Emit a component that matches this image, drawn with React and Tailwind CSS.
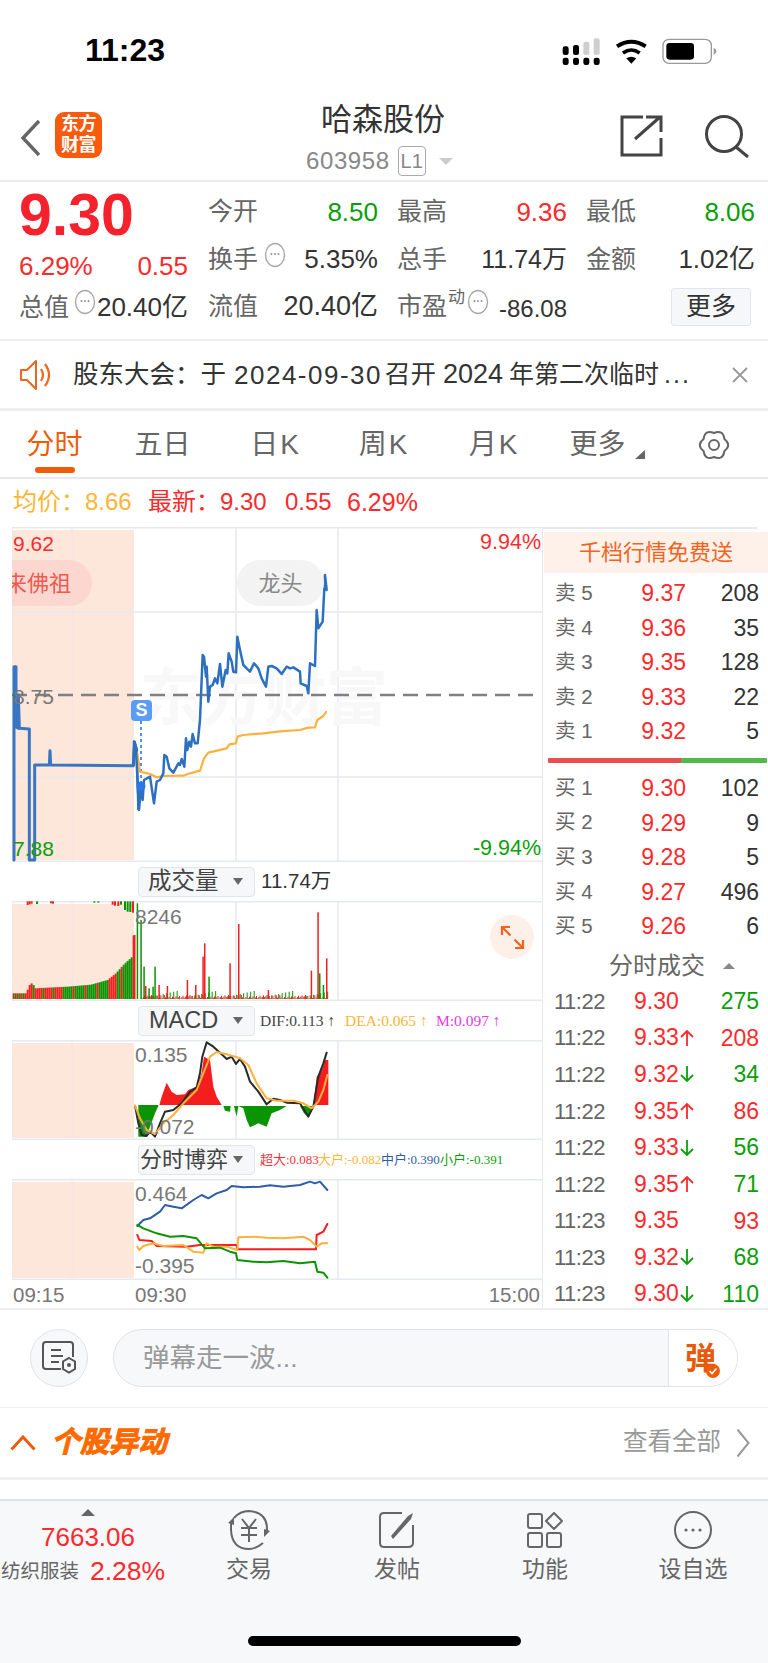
import React from "react";

const RED = "#fa2a2d";
const GREEN = "#0a9f0a";

const blue1 = "42,1020 42,440 48,440 48,620 55,625 55,525 58,625 88,627 88,1020 104,1020 104,735 148,735 150,692 152,735 400,737 403,665 410,690";
const blue2 = "12,545 18,570 27,750 33,680 38,720 42,660 60,650 72,730 80,665 90,660 100,640 103,585 110,590 118,625 130,638 145,610 150,615 155,597 163,620 168,535 172,570 178,545 183,560 188,522 195,550 203,550 210,480 218,285 222,290 228,350 230,320 235,425 240,380 248,375 255,355 262,370 270,312 277,380 287,330 292,340 296,280 305,305 310,335 318,337 322,230 330,270 340,315 350,325 360,335 372,310 385,325 395,355 408,380 415,320 425,318 440,325 455,342 470,320 480,325 490,322 510,335 512,370 530,378 535,400 540,310 555,318 560,150 565,205 578,185 585,45 590,90";
const yellow = "22,580 30,635 60,642 80,652 100,648 160,647 180,640 210,632 222,595 235,578 290,565 298,553 318,550 322,530 340,525 400,520 450,514 510,510 535,503 555,502 562,480 580,468 588,456";

const macdRed1 = "478,735 485,710 500,668 515,695 530,705 555,703 565,690 590,680 605,640 612,590 630,600 640,680 650,710 665,735";
const macdGreen1 = "405,735 415,735 415,830 440,830 450,800 465,760 475,738 475,735";
const macdGreen2 = "670,738 675,752 690,755 692,738 702,738 710,770 715,738 730,745 740,780 750,802 765,795 775,790 800,800 815,760 840,750 860,738";
const macdGreen3 = "900,738 912,760 925,772 935,745 938,738";
const macdRed2 = "940,735 950,650 965,632 975,600 985,600 985,735";
const dif = "405,737 415,790 425,825 440,828 450,815 465,830 480,790 495,755 520,750 545,730 570,695 590,682 600,640 607,590 620,547 640,560 665,583 680,597 695,590 708,612 720,597 735,620 750,665 775,695 800,733 820,716 840,720 860,728 900,730 925,770 940,740 955,650 970,610 980,578";
const dea = "405,737 420,775 440,810 465,822 490,790 520,765 550,730 590,690 610,640 630,590 650,576 680,583 720,595 745,615 770,670 800,715 830,722 880,722 910,730 935,745 955,725 970,690 982,645";

const gBlue = "412,1098 430,1080 450,1075 480,1055 495,1035 520,1040 545,1045 580,1020 605,1005 625,1015 650,1000 680,990 695,978 730,982 780,980 810,976 850,980 900,975 930,965 945,970 960,965 982,990";
const gGreen = "412,1095 430,1105 470,1120 510,1130 550,1128 590,1135 615,1165 660,1163 690,1175 708,1180 712,1200 760,1205 800,1207 850,1203 900,1210 945,1205 952,1235 970,1238 982,1253";
const gRed = "412,1125 418,1140 455,1143 470,1158 560,1160 600,1155 710,1155 712,1168 948,1168 950,1125 970,1115 982,1092";
const gYellow = "412,1160 418,1170 430,1158 460,1150 490,1158 550,1155 580,1175 610,1178 620,1150 640,1160 680,1160 712,1170 715,1132 760,1130 800,1133 850,1135 910,1130 930,1140 950,1160 965,1150 982,1150";

const envelope = [[38, 400], [78, 400], [82, 378], [95, 368], [102, 385], [200, 380], [270, 374], [320, 360], [345, 340], [370, 312], [392, 292], [398, 226], [402, 226]];
function interp(x) {
  for (let i = 1; i < envelope.length; i++) {
    const [a, b] = envelope[i - 1];
    const [c, d] = envelope[i];
    if (x <= c) return b + ((x - a) / (c - a)) * (d - b);
  }
  return 400;
}
const preBars = [];
for (let x = 38, i = 0; x < 404; x += 6, i++) {
  const isRed = x < 80 ? i % 2 === 0 : x < 190 ? i % 5 !== 0 : x > 330 && x < 350 ? true : i % 6 === 0;
  preBars.push({ x, y: interp(x), red: isRed });
}
const spikes = [
  [410, 130, 0], [421, 180, 0], [430, 320, 0], [463, 320, 0], [457, 380, 0], [625, 350, 0], [957, 340, 0], [968, 375, 0],
  [402, 225, 1], [612, 250, 1], [607, 290, 1], [688, 310, 1], [714, 192, 1], [560, 360, 1], [585, 375, 1], [932, 332, 1], [952, 157, 1], [978, 295, 1], [803, 390, 1], [475, 375, 1], [500, 378, 1], [435, 378, 1], [445, 385, 0],
];
const lowBars = [];
for (let x = 425, i = 0; x < 985; x += 3.5, i++) {
  lowBars.push({ x, y: 415 - ((i * 37) % 11) * (i % 3 === 0 ? 2.2 : 1), red: (i * 7) % 3 !== 0 });
}
const topBars = [
  [80, 135, 1], [86, 133, 1], [92, 131, 1], [108, 132, 0], [150, 130, 1], [156, 131, 1], [280, 128, 0], [292, 128, 0], [335, 134, 1], [342, 137, 1], [352, 138, 1], [360, 134, 0], [372, 150, 0], [380, 155, 0], [388, 156, 0], [396, 158, 1],
];

function gearPath(cx, cy, rx, ry) {
  let d = "";
  for (let i = 0; i < 6; i++) {
    const a0 = ((i * 60 - 30) * Math.PI) / 180;
    const a1 = ((i * 60) * Math.PI) / 180;
    const a2 = ((i * 60 + 30) * Math.PI) / 180;
    const v = 0.8;
    const p = 1.2;
    if (i === 0) d += `M${(cx + rx * v * Math.cos(a0)).toFixed(1)} ${(cy + ry * v * Math.sin(a0)).toFixed(1)}`;
    d += `Q${(cx + rx * p * Math.cos(a1)).toFixed(1)} ${(cy + ry * p * Math.sin(a1)).toFixed(1)} ${(cx + rx * v * Math.cos(a2)).toFixed(1)} ${(cy + ry * v * Math.sin(a2)).toFixed(1)}`;
  }
  return d + "Z";
}
const GEAR = gearPath(17, 16, 15, 15);

function Line({ points, color, w = 5 }) {
  return <polyline points={points} fill="none" stroke={color} strokeWidth={w} strokeLinejoin="round" strokeLinecap="round" />;
}

function Grid({ y1, y2, hs = [] }) {
  return (
    <>
      <rect x="12" y={y1 + 3} width="122" height={y2 - y1 - 5} fill="#fde6da" />
      {[72, 236, 338].map((x) => (
        <line key={x} x1={x} x2={x} y1={y1} y2={y2} stroke={x === 72 ? "#f2e6e4" : "#e6e9f0"} strokeWidth={x === 72 ? 1 : 1.5} />
      ))}
      <line x1="12" x2="12" y1={y1} y2={y2} stroke="#e6e9f0" strokeWidth="1" />
      {hs.map((y) => (
        <line key={y} x1="12" x2="542" y1={y} y2={y} stroke="#e6e9f0" strokeWidth="1.5" />
      ))}
      <line x1="12" x2="542" y1={y1 + 0.5} y2={y1 + 0.5} stroke="#e6e9f0" strokeWidth="2" />
      <line x1="12" x2="542" y1={y2 - 0.5} y2={y2 - 0.5} stroke="#e6e9f0" strokeWidth="2" />
    </>
  );
}

function Dots({ className = "" }) {
  return (
    <svg width="22" height="26" viewBox="0 0 22 26" className={className}>
      <ellipse cx="11" cy="13" rx="9.5" ry="11.5" fill="none" stroke="#a8a8a8" strokeWidth="1.4" />
      <circle cx="7.5" cy="12" r="0.9" fill="#888" />
      <circle cx="11" cy="12" r="0.9" fill="#888" />
      <circle cx="14.5" cy="12" r="0.9" fill="#888" />
    </svg>
  );
}

function Stat({ label, value, color = "#333", icon, sup, valueCls = "text-[26px]" }) {
  return (
    <div className="flex items-center justify-between">
      <div className="flex items-center">
        <span className="text-[25px] text-[#666] leading-none">{label}</span>
        {sup && <span className="text-[17px] text-[#666] leading-none -mt-[18px] ml-[1px]">{sup}</span>}
        {icon && <Dots className={sup ? "ml-[2px] -mt-[10px]" : "ml-[6px] -mt-[8px]"} />}
      </div>
      <span className={`${valueCls} leading-none whitespace-nowrap`} style={{ color }}>{value}</span>
    </div>
  );
}

function Caret() {
  return <span className="w-0 h-0 border-x-[5px] border-x-transparent border-t-[7px] border-t-[#666]" />;
}

function SubHeader({ title, children }) {
  return (
    <div className="h-[39px] flex items-center pl-[126px] w-[530px]">
      <div className="w-[117px] h-[30px] flex items-center justify-between pl-[1px] pr-[11px] rounded-[4px] border border-[#e2e5ea] bg-[#f6f7f9]">
        <span className="text-[#444] leading-none whitespace-nowrap">{title}</span>
        <Caret />
      </div>
      {children}
    </div>
  );
}

function Book({ label, price, qty }) {
  return (
    <div className="h-[34.6px] flex items-center pl-[12px] pr-[9px]">
      <span className="w-[60px] text-[#666] whitespace-nowrap text-[20.5px]">{label}</span>
      <span className="w-[71px] text-right text-[23px]" style={{ color: RED }}>{price}</span>
      <span className="flex-1 text-right text-[#333] text-[23px]">{qty}</span>
    </div>
  );
}

function Arrow({ up }) {
  const c = up ? RED : GREEN;
  return (
    <svg width="14" height="18" viewBox="0 0 14 18" className="ml-[1px]">
      {up ? (
        <path d="M7 17V2M1 8l6-6 6 6" fill="none" stroke={c} strokeWidth="1.8" />
      ) : (
        <path d="M7 1v15M1 10l6 6 6-6" fill="none" stroke={c} strokeWidth="1.8" />
      )}
    </svg>
  );
}

function Trade({ time, price, arrow, qty, qc }) {
  return (
    <div className="h-[36.6px] flex items-center pl-[11px] pr-[9px] shrink-0">
      <span className="w-[80px] text-[22px] tracking-[-0.5px] text-[#666]">{time}</span>
      <span className="text-[23px] leading-none" style={{ color: RED }}>{price}</span>
      {arrow && <Arrow up={arrow === "u"} />}
      <span className="flex-1 text-right text-[23px]" style={{ color: qc }}>{qty}</span>
    </div>
  );
}

function NavItem({ icon, label }) {
  return (
    <div className="w-[148px] flex flex-col items-center">
      <div className="h-[43px] flex items-center">{icon}</div>
      <span className="mt-[3px] text-[23px] leading-[30px] text-[#666] whitespace-nowrap">{label}</span>
    </div>
  );
}

const Axis = ({ cls, children }) => <span className={`absolute leading-none ${cls}`}>{children}</span>;

export default function App() {
  return (
    <div className="w-[768px] h-[1663px] overflow-hidden bg-white flex flex-col font-['Liberation_Sans','Noto_Sans_CJK_SC',sans-serif]">
      {/* status bar */}
      <div className="h-[100px] shrink-0 flex items-start pt-[32px] pl-[85px] pr-[50px] justify-between">
        <span className="text-[32px] leading-[36px] font-bold text-black">11:23</span>
        <svg width="156" height="30" viewBox="0 0 468 90" className="mt-[3px]">
          <g transform="translate(-20 -28)">
            <g fill="#000">
              <rect x="22" y="96" width="18" height="22" rx="7" />
              <rect x="53" y="96" width="18" height="22" rx="7" />
              <rect x="84" y="96" width="18" height="22" rx="7" />
              <rect x="115" y="96" width="18" height="22" rx="7" />
              <rect x="22" y="62" width="18" height="26" rx="7" />
              <rect x="53" y="58" width="18" height="30" rx="7" />
            </g>
            <rect x="84" y="48" width="18" height="40" rx="6" fill="#cfcfcf" />
            <rect x="115" y="38" width="18" height="50" rx="6" fill="#cfcfcf" />
            <g fill="none" stroke="#000" strokeLinecap="butt">
              <path d="M185 62 Q228 34 271 62" strokeWidth="12" />
              <path d="M203 82 Q228 64 253 82" strokeWidth="11" />
            </g>
            <path d="M213 98 Q228 88 243 98 L228 114 Z" fill="#000" />
            <rect x="323" y="41" width="145" height="72" rx="18" fill="none" stroke="#9a9a9a" strokeWidth="4" />
            <rect x="333" y="52" width="83" height="50" rx="10" fill="#000" />
            <path d="M475 66 Q483 70 483 77 Q483 84 475 88 Z" fill="#9a9a9a" />
          </g>
        </svg>
      </div>

      {/* nav */}
      <div className="relative h-[80px] shrink-0 flex items-start">
        <svg width="24" height="40" viewBox="0 0 24 40" className="mt-[18px] ml-[19px]">
          <path d="M20 3 L4 20 L20 37" fill="none" stroke="#666" strokeWidth="3.4" />
        </svg>
        <div className="ml-[12px] mt-[12px] w-[47px] h-[46px] rounded-[9px] bg-[#fa5a0c] flex flex-col items-center justify-center text-white font-bold text-[18px] leading-[21px] tracking-[-0.5px]">
          <span>东方</span>
          <span>财富</span>
        </div>
        <div className="absolute left-[320px] top-[3px] w-[126px] text-center text-[31px] leading-[34px] text-[#333] whitespace-nowrap">哈森股份</div>
        <div className="absolute left-[306px] top-[46px] flex items-center">
          <span className="text-[24px] leading-[30px] text-[#888] tracking-[0.6px]">603958</span>
          <span className="ml-[8px] w-[28px] h-[30px] rounded-[4px] border border-[#aaa] text-[20px] leading-[28px] text-center text-[#888]">L1</span>
          <span className="ml-[13px] w-0 h-0 border-x-[7px] border-x-transparent border-t-[7px] border-t-[#ccc]" />
        </div>
        <svg width="44" height="44" viewBox="0 0 44 44" className="absolute left-[620px] top-[14px]">
          <path d="M23 3H2V41H41V24M15 25L40 3M26 3H41V18" fill="none" stroke="#444" strokeWidth="3" />
        </svg>
        <svg width="46" height="44" viewBox="0 0 46 44" className="absolute left-[704px] top-[14px]">
          <circle cx="20" cy="20" r="17.5" fill="none" stroke="#444" strokeWidth="3" />
          <path d="M32 33L44 43" fill="none" stroke="#444" strokeWidth="3" />
        </svg>
      </div>
      <div className="h-[2px] shrink-0 bg-[#ececec]" />

      {/* quote */}
      <div className="h-[157px] shrink-0 flex pl-[19px]">
        <div className="w-[169px] shrink-0">
          <div className="h-[66px] flex items-center text-[59px] font-bold leading-none" style={{ color: "#f5222d" }}>9.30</div>
          <div className="h-[36px] flex items-center justify-between text-[26px] leading-none" style={{ color: RED }}>
            <span>6.29%</span>
            <span>0.55</span>
          </div>
          <div className="h-[46px] flex items-center justify-between">
            <div className="flex items-center">
              <span className="text-[25px] text-[#666] leading-none">总值</span>
              <Dots className="ml-[5px] -mt-[10px]" />
            </div>
            <span className="text-[26px] text-[#333] leading-none whitespace-nowrap">20.40亿</span>
          </div>
        </div>
        <div className="ml-[20px] pt-[6px] w-[547px] grid grid-cols-[170px_170px_169px] grid-rows-[47.5px_47.5px_47.5px] gap-x-[19px] items-center">
          <Stat label="今开" value="8.50" color={GREEN} />
          <Stat label="最高" value="9.36" color={RED} />
          <Stat label="最低" value="8.06" color={GREEN} />
          <Stat label="换手" value="5.35%" icon />
          <Stat label="总手" value="11.74万" valueCls="text-[25px]" />
          <Stat label="金额" value="1.02亿" />
          <Stat label="流值" value="20.40亿" valueCls="text-[27px]" />
          <Stat label="市盈" sup="动" icon value="-86.08" valueCls="text-[24px] mt-[4px]" />
          <div className="flex justify-end pr-[4px]">
            <div className="w-[80px] h-[38px] rounded-[3px] border border-[#e2e5ea] bg-[#f6f7f9] flex items-center justify-center text-[25px] text-[#333]">更多</div>
          </div>
        </div>
      </div>
      <div className="h-[2px] shrink-0 bg-[#eeeeee]" />

      {/* notice */}
      <div className="h-[67px] shrink-0 flex items-center pl-[20px] pr-[20px]">
        <svg width="33" height="32" viewBox="0 0 33 32">
          <path d="M1 11H7L16 2V30L7 21H1Z" fill="none" stroke="#f0651e" strokeWidth="2" strokeLinejoin="round" />
          <path d="M21 10Q25 16 21 22M25 5Q33 16 25 27" fill="none" stroke="#f0651e" strokeWidth="2.2" />
        </svg>
        <div className="ml-[20px] flex items-center text-[25.5px] leading-none text-[#333] whitespace-nowrap">
          <span className="w-[155px]">股东大会：于</span>
          <span className="ml-[6px] w-[151px] text-[26px] tracking-[1.5px]">2024-09-30</span>
          <span className="w-[58px]">召开</span>
          <span className="w-[66px] text-[27px]">2024</span>
          <span className="w-[155px] text-[25px]">年第二次临时</span>
          <span className="text-[25px] tracking-[2px]">...</span>
        </div>
        <svg width="16" height="16" viewBox="0 0 16 16" className="ml-auto">
          <path d="M1 1L15 15M15 1L1 15" stroke="#999" strokeWidth="1.8" />
        </svg>
      </div>
      <div className="h-[3px] shrink-0 bg-[#eeeeee]" />

      {/* tabs */}
      <div className="relative h-[66px] shrink-0 flex items-center text-[28px] text-[#666] leading-none pt-[1px]">
        <span className="w-[109px] text-center text-[#ee5c0a] whitespace-nowrap">分时</span>
        <span className="w-[107px] text-center whitespace-nowrap">五日</span>
        <span className="w-[119px] text-center whitespace-nowrap tracking-[2px]">日K</span>
        <span className="w-[98px] text-center whitespace-nowrap tracking-[2px]">周K</span>
        <span className="w-[122px] text-center whitespace-nowrap tracking-[2px]">月K</span>
        <span className="w-[85px] text-center whitespace-nowrap">更多</span>
        <svg width="10" height="9" viewBox="0 0 10 9" className="mt-[20px] -ml-[5px]">
          <path d="M10 0V9H0Z" fill="#666" />
        </svg>
        <svg width="34" height="32" viewBox="0 0 34 32" className="ml-[52px]">
          <path d={GEAR} fill="none" stroke="#666" strokeWidth="2" strokeLinejoin="round" />
          <circle cx="17" cy="16" r="5" fill="none" stroke="#666" strokeWidth="2" />
        </svg>
        <span className="absolute left-[35px] top-[56px] w-[40px] h-[6px] rounded-full bg-[#ee5c0a]" />
      </div>
      <div className="h-[2px] shrink-0 bg-[#e6e8ee]" />

      {/* info */}
      <div className="h-[48px] shrink-0 flex items-center pl-[13px] text-[24px] leading-none whitespace-nowrap pb-[2px]">
        <span className="text-[#fdb535] w-[72px]">均价：</span>
        <span className="text-[#fdb535] w-[63px]">8.66</span>
        <span className="w-[72px]" style={{ color: RED }}>最新：</span>
        <span className="w-[65px]" style={{ color: RED }}>9.30</span>
        <span className="w-[62px]" style={{ color: RED }}>0.55</span>
        <span className="text-[25px]" style={{ color: RED }}>6.29%</span>
      </div>

      {/* chart + book */}
      <div className="h-[781px] shrink-0 flex overflow-hidden">
        <div className="w-[530px] ml-[12px] shrink-0 flex flex-col">
          {/* main */}
          <div className="relative h-[335px] shrink-0 overflow-hidden">
            <svg width="530" height="335" viewBox="12 527 530 335" className="absolute inset-0">
              <Grid y1={527} y2={862} hs={[612, 777]} />
              <text x="140" y="720" fontSize="62" fontWeight="700" fill="#f8f8f8" fontFamily="Noto Sans CJK SC">东方财富</text>
              <line x1="12" x2="541" y1="695" y2="695" stroke="#808080" strokeWidth="2.5" strokeDasharray="15 8" />
              <g transform="translate(0 520) scale(0.33333)">
                <Line points={blue1} color="#3876c4" w={9} />
                <polyline points="400,737 403,665 410,690 415,870" fill="none" stroke="#2e70c0" strokeWidth="7" />
              </g>
              <line x1="141" x2="141" y1="721" y2="786" stroke="#4d90f5" strokeWidth="2" strokeDasharray="3 3" />
              <g transform="translate(130 560) scale(0.33333)">
                <Line points={yellow} color="#fdb13c" w={6.5} />
                <Line points={blue2} color="#2e70c0" w={7.5} />
              </g>
              <circle cx="141" cy="786" r="4.5" fill="#2878ea" />
            </svg>
            <div className="absolute left-[119px] top-[173px] w-[21px] h-[21px] rounded-[4px] bg-[#5b9cf5] text-white text-[18px] font-bold leading-[21px] text-center">S</div>
            <div className="absolute left-0 top-[33px] w-[80px] h-[46px] rounded-r-full bg-[#fbd7d0] overflow-hidden flex items-center justify-end pr-[21px] text-[22px] text-[#ee5a50] whitespace-nowrap">来佛祖</div>
            <div className="absolute left-[225px] top-[33px] w-[87px] h-[46px] rounded-full bg-[#f3f3f3] flex items-center justify-center text-[22px] text-[#888]">龙头</div>
            <Axis cls="left-[1px] top-[6px] text-[21px]"><span style={{ color: RED }}>9.62</span></Axis>
            <Axis cls="left-[1px] top-[159px] text-[21px] text-[#777]">8.75</Axis>
            <Axis cls="left-[1px] top-[311px] text-[21px]"><span style={{ color: GREEN }}>7.88</span></Axis>
            <Axis cls="right-[1px] top-[5px] text-[21.5px]"><span style={{ color: RED }}>9.94%</span></Axis>
            <Axis cls="right-[1px] top-[311px] text-[21.5px]"><span style={{ color: GREEN }}>-9.94%</span></Axis>
          </div>

          <SubHeader title={<span className="pl-[8px] text-[23.5px]">成交量</span>}>
            <span className="ml-[6px] text-[20.5px] leading-none text-[#333] whitespace-nowrap">11.74万</span>
          </SubHeader>

          {/* volume */}
          <div className="relative h-[100px] shrink-0">
            <svg width="530" height="100" viewBox="12 901 530 100" className="absolute inset-0">
              <Grid y1={901} y2={1001} />
              <g transform="translate(0 860) scale(0.33333)">
                {preBars.map((b) => (
                  <rect key={b.x} x={b.x} y={b.y} width="6" height={417 - b.y} fill={b.red ? "#f51e1e" : "#0a9400"} />
                ))}
                {topBars.map(([x, y, r]) => (
                  <rect key={x} x={x} y="124" width="6" height={y - 124} fill={r ? "#f51e1e" : "#0a9400"} />
                ))}
                {lowBars.map((b) => (
                  <rect key={b.x} x={b.x} y={b.y} width="3" height={417 - b.y} fill={b.red ? "#f51e1e" : "#0a9400"} />
                ))}
                {spikes.map(([x, y, r]) => (
                  <rect key={x} x={x} y={y} width="4.5" height={417 - y} fill={r ? "#f51e1e" : "#0a9400"} />
                ))}
              </g>
            </svg>
            <Axis cls="left-[123px] top-[5px] text-[21px] text-[#777]">8246</Axis>
            <div className="absolute left-[478px] top-[14px] w-[44px] h-[44px] rounded-full bg-[#fdf0e8] flex items-center justify-center">
              <svg width="44" height="44" viewBox="0 0 44 44">
                <path d="M12 20V12H20M12 12L20.5 20.5M33 25V33H25M33 33L24.5 24.5" fill="none" stroke="#f2641e" strokeWidth="2.2" />
              </svg>
            </div>
          </div>

          <SubHeader title={<span className="pl-[9px] text-[23.5px]">MACD</span>}>
            <div className="ml-[5px] flex text-[15.5px] leading-none font-['Liberation_Serif','Noto_Sans_CJK_SC',serif] whitespace-nowrap">
              <span className="w-[85px] text-[#444]">DIF:0.113 ↑</span>
              <span className="w-[91px] text-[#fdb535]">DEA:0.065 ↑</span>
              <span className="text-[#e838e8]">M:0.097 ↑</span>
            </div>
          </SubHeader>

          {/* macd */}
          <div className="relative h-[100px] shrink-0">
            <svg width="530" height="100" viewBox="12 1040 530 100" className="absolute inset-0">
              <Grid y1={1040} y2={1140} />
              <g transform="translate(0 860) scale(0.33333)">
                <polygon points={macdRed1} fill="#f51e1e" />
                <polygon points={macdRed2} fill="#f51e1e" />
                <polygon points={macdGreen1} fill="#0a9400" />
                <polygon points={macdGreen2} fill="#0a9400" />
                <polygon points={macdGreen3} fill="#0a9400" />
                <Line points={dif} color="#2a2a2a" w={6} />
                <Line points={dea} color="#fdb13c" w={6} />
              </g>
            </svg>
            <Axis cls="left-[123px] top-[4px] text-[21px] text-[#777]">0.135</Axis>
            <Axis cls="left-[123px] top-[76px] text-[21px] text-[#777]">-0.072</Axis>
          </div>

          <SubHeader title={<span className="text-[22px]">分时博弈</span>}>
            <div className="ml-[5px] flex text-[13px] leading-none font-['Liberation_Serif','Noto_Sans_CJK_SC',serif] whitespace-nowrap">
              <span className="w-[58px] text-[#f5323c]">超大:0.083</span>
              <span className="w-[63px] text-[#fdb535]">大户:-0.082</span>
              <span className="w-[59px] text-[#2f5da5]">中户:0.390</span>
              <span className="text-[#0a9f0a]">小户:-0.391</span>
            </div>
          </SubHeader>

          {/* game */}
          <div className="relative h-[101px] shrink-0">
            <svg width="530" height="101" viewBox="12 1179 530 101" className="absolute inset-0">
              <Grid y1={1179} y2={1280} />
              <g transform="translate(0 860) scale(0.33333)">
                <Line points={gBlue} color="#2f5da5" w={6} />
                <Line points={gRed} color="#f51e1e" w={6} />
                <Line points={gYellow} color="#fdb13c" w={6} />
                <Line points={gGreen} color="#0a9400" w={6} />
              </g>
            </svg>
            <Axis cls="left-[123px] top-[4px] text-[21px] text-[#777]">0.464</Axis>
            <Axis cls="left-[123px] top-[76px] text-[21px] text-[#777]">-0.395</Axis>
          </div>

          {/* axis */}
          <div className="h-[28px] shrink-0 flex items-center justify-between text-[20.5px] text-[#777] leading-none pt-[3px]">
            <div className="flex">
              <span className="ml-[1px] w-[122px]">09:15</span>
              <span>09:30</span>
            </div>
            <span className="mr-[2px]">15:00</span>
          </div>
        </div>

        {/* right panel */}
        <div className="w-[226px] border-l border-[#e6e9f0] flex flex-col">
          <div className="h-[2px] w-[214px] shrink-0 bg-[#e6e9f0]" />
          <div className="ml-[1px] mt-[3px] h-[41px] shrink-0 bg-[#fdf1ea] flex items-center justify-center text-[22px] text-[#f0651e] leading-none">千档行情免费送</div>
          <div className="mt-[3px] shrink-0">
            <Book label="卖 5" price="9.37" qty="208" />
            <Book label="卖 4" price="9.36" qty="35" />
            <Book label="卖 3" price="9.35" qty="128" />
            <Book label="卖 2" price="9.33" qty="22" />
            <Book label="卖 1" price="9.32" qty="5" />
          </div>
          <div className="mt-[9px] ml-[5px] mr-[1px] h-[5px] shrink-0 flex rounded-[1px] overflow-hidden">
            <div className="w-[133px] bg-[#ea4f4f]" />
            <div className="flex-1 bg-[#55b84a]" />
          </div>
          <div className="mt-[8px] shrink-0">
            <Book label="买 1" price="9.30" qty="102" />
            <Book label="买 2" price="9.29" qty="9" />
            <Book label="买 3" price="9.28" qty="5" />
            <Book label="买 4" price="9.27" qty="496" />
            <Book label="买 5" price="9.26" qty="6" />
          </div>
          <div className="mt-[5px] h-[34px] shrink-0 flex items-center pl-[66px] text-[24px] text-[#666] leading-none whitespace-nowrap">
            <span>分时成交</span>
            <span className="ml-[18px] w-0 h-0 border-x-[6px] border-x-transparent border-b-[6px] border-b-[#888]" />
          </div>
          <Trade time="11:22" price="9.30" qty="275" qc={GREEN} />
          <Trade time="11:22" price="9.33" arrow="u" qty="208" qc={RED} />
          <Trade time="11:22" price="9.32" arrow="d" qty="34" qc={GREEN} />
          <Trade time="11:22" price="9.35" arrow="u" qty="86" qc={RED} />
          <Trade time="11:22" price="9.33" arrow="d" qty="56" qc={GREEN} />
          <Trade time="11:22" price="9.35" arrow="u" qty="71" qc={GREEN} />
          <Trade time="11:23" price="9.35" qty="93" qc={RED} />
          <Trade time="11:23" price="9.32" arrow="d" qty="68" qc={GREEN} />
          <Trade time="11:23" price="9.30" arrow="d" qty="110" qc={GREEN} />
        </div>
      </div>
      <div className="h-[2px] shrink-0 bg-[#eeeeee]" />

      {/* comment */}
      <div className="h-[97px] shrink-0 flex items-start pt-[19px] pl-[30px]">
        <div className="w-[58px] h-[58px] rounded-full border border-[#e0e3e8] bg-[#f7f8fa] flex items-center justify-center">
          <svg width="36" height="36" viewBox="0 0 36 36">
            <path d="M20 29H5Q2 29 2 26V5Q2 2 5 2H29Q32 2 32 5V17" fill="none" stroke="#555" strokeWidth="2" />
            <path d="M10 10H20M10 16H22M10 22H18" stroke="#555" strokeWidth="2" />
            <path d="M28 18L34 21.5V29L28 32.5L22 29V21.5Z" fill="none" stroke="#555" strokeWidth="2" />
            <circle cx="28" cy="25" r="2" fill="#555" />
          </svg>
        </div>
        <div className="ml-[25px] w-[625px] h-[58px] rounded-full border border-[#e0e3e8] bg-[#f7f8fa] flex overflow-hidden">
          <div className="flex-1 flex items-center pl-[29px] text-[26.5px] text-[#999] leading-none whitespace-nowrap">弹幕走一波...</div>
          <div className="relative w-[69px] border-l border-[#e0e3e8] bg-white flex items-center pl-[16px] text-[31px] font-bold text-[#e8590c] leading-none">
            弹
            <svg width="14" height="14" viewBox="0 0 14 14" className="absolute left-[37px] top-[34px]">
              <circle cx="7" cy="7" r="7" fill="#ee5c0a" />
              <path d="M3.5 7L6 9.5L10.5 4.5" fill="none" stroke="#fff" strokeWidth="1.6" />
            </svg>
          </div>
        </div>
      </div>
      <div className="h-[1px] shrink-0 bg-[#eeeeee]" />

      {/* section */}
      <div className="h-[69px] shrink-0 flex items-center pl-[10px] pr-[18px]">
        <svg width="26" height="16" viewBox="0 0 26 16">
          <path d="M1.5 14.5L13 2L24.5 14.5" fill="none" stroke="#ee5c0a" strokeWidth="3" />
        </svg>
        <span className="ml-[15px] text-[29px] italic font-bold text-[#ff6a00] leading-none whitespace-nowrap [-webkit-text-stroke:1px_#ff6a00]">个股异动</span>
        <span className="ml-auto text-[24.5px] text-[#999] leading-none whitespace-nowrap">查看全部</span>
        <svg width="14" height="30" viewBox="0 0 14 30" className="ml-[15px]">
          <path d="M1.5 1.5L12.5 15L1.5 28.5" fill="none" stroke="#999" strokeWidth="2" />
        </svg>
      </div>
      <div className="h-[3px] shrink-0 bg-[#f0f0f0]" />
      <div className="h-[19px] shrink-0 bg-white" />

      {/* bottom nav */}
      <div className="flex-1 border-t-2 border-[#e2e2e2] bg-[#f7f8fa] flex flex-col">
        <div className="flex h-[135px] pt-[8px]">
          <div className="w-[176px] flex flex-col items-center">
            <span className="w-0 h-0 border-x-[7px] border-x-transparent border-b-[7px] border-b-[#666]" />
            <span className="mt-[9px] text-[26px] leading-[24px]" style={{ color: RED }}>7663.06</span>
            <div className="mt-[9px] flex items-center whitespace-nowrap leading-none self-start">
              <span className="ml-[1px] text-[19.5px] text-[#666]">纺织服装</span>
              <span className="ml-[11px] text-[26.5px]" style={{ color: RED }}>2.28%</span>
            </div>
          </div>
          <div className="flex -ml-[1px] -mt-[1px]">
            <NavItem
              label="交易"
              icon={
                <svg width="44" height="42" viewBox="0 0 44 42">
                  <path d="M7 9Q13 2 22 2Q40 3 40 20V24M36 34Q29 40 22 40Q5 40 4 21V14" fill="none" stroke="#666" strokeWidth="2" />
                  <path d="M1 14L7 8V16ZM43 22L37 28V20Z" fill="#666" />
                  <path d="M15 10L22 19L29 10M14 19H30M14 26H30M22 19V33" fill="none" stroke="#666" strokeWidth="2" />
                </svg>
              }
            />
            <NavItem
              label="发帖"
              icon={
                <svg width="38" height="38" viewBox="0 0 38 38">
                  <path d="M24 2H6Q2 2 2 6V32Q2 36 6 36H30Q35 36 35 32V14" fill="none" stroke="#666" strokeWidth="2" />
                  <path d="M13 25L30 5L35 2L33 8L15 28Z" fill="#666" />
                </svg>
              }
            />
            <NavItem
              label="功能"
              icon={
                <svg width="36" height="36" viewBox="0 0 36 36">
                  <g fill="none" stroke="#666" strokeWidth="2">
                    <rect x="1" y="2" width="14" height="14" rx="2" />
                    <rect x="1" y="21" width="14" height="14" rx="2" />
                    <rect x="20" y="21" width="14" height="14" rx="2" />
                    <path d="M27 1L35 9L27 17L19 9Z" strokeLinejoin="round" />
                  </g>
                </svg>
              }
            />
            <NavItem
              label="设自选"
              icon={
                <svg width="38" height="38" viewBox="0 0 38 38">
                  <circle cx="19" cy="19" r="18" fill="none" stroke="#666" strokeWidth="2" />
                  <circle cx="12" cy="19" r="1.6" fill="#666" />
                  <circle cx="19" cy="19" r="1.6" fill="#666" />
                  <circle cx="26" cy="19" r="1.6" fill="#666" />
                </svg>
              }
            />
          </div>
        </div>
        <div className="ml-[248px] w-[273px] h-[10px] rounded-full bg-black" />
      </div>
    </div>
  );
}
